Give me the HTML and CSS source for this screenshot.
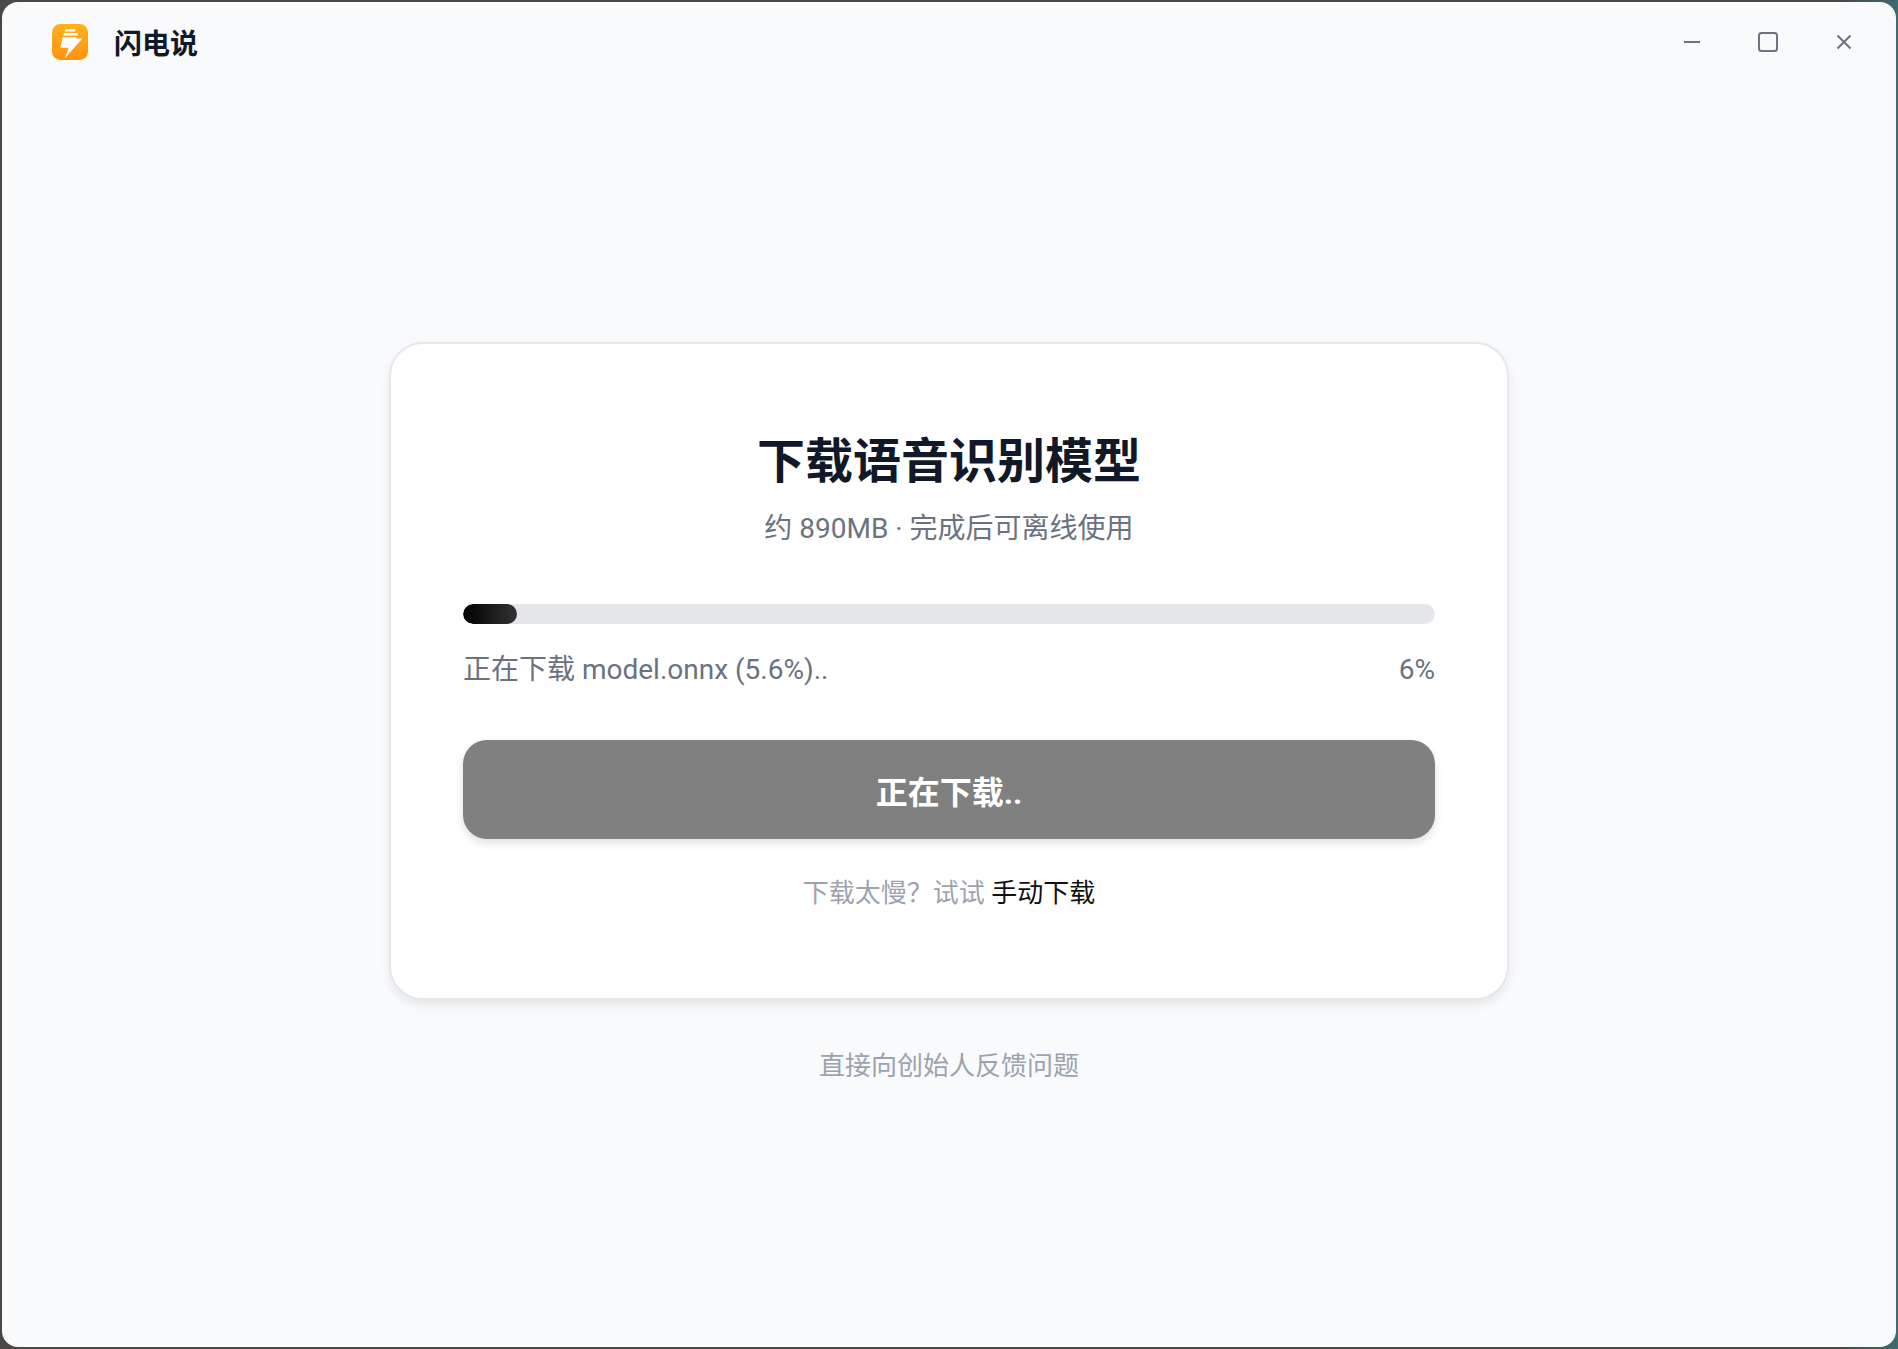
FILE: index.html
```html
<!DOCTYPE html>
<html lang="zh-CN">
<head>
    <meta charset="UTF-8">
    <meta name="viewport" content="width=device-width, initial-scale=1.0">
    <title>闪电说</title>
    <link rel="stylesheet" href="styles.css">
</head>
<body>
    <div class="window">
        <header class="titlebar">
            <div class="brand">
                <svg class="logo" viewBox="0 0 35 35">
                    <defs>
                        <linearGradient id="logoFill" x1="0" y1="0" x2="0" y2="1">
                            <stop offset="0" stop-color="#ffb21c"/>
                            <stop offset="1" stop-color="#ff9212"/>
                        </linearGradient>
                    </defs>
                    <rect width="35" height="35" rx="8" fill="url(#logoFill)"/>
                    <path d="M13 5h10l-.6 2.200H12.400zM11.800 8.800h13.600l-.8 2.400H11zM10.400 13h13.200l-.8 1H29.500L12.300 33.500 16.300 23H8z" fill="#fff"/>
                </svg>
                <span class="app-name">闪电说</span>
            </div>
            <div class="window-controls">
                <button class="control-button">
                    <svg viewBox="0 0 20 20"><path d="M2 10h16"/></svg>
                </button>
                <button class="control-button">
                    <svg viewBox="0 0 20 20"><rect x="1" y="1" width="18" height="18" rx="2.5"/></svg>
                </button>
                <button class="control-button">
                    <svg viewBox="0 0 20 20"><path d="M3.500 3.500l13 13M16.500 3.500l-13 13"/></svg>
                </button>
            </div>
        </header>
        <main class="content">
            <section class="card">
                <h1 class="card-title">下载语音识别模型</h1>
                <p class="card-subtitle">约 890MB · 完成后可离线使用</p>
                <div class="progress-track">
                    <div class="progress-fill" style="width: 5.6%"></div>
                </div>
                <div class="progress-info">
                    <span>正在下载 model.onnx (5.6%)..</span>
                    <span>6%</span>
                </div>
                <button class="download-button">正在下载..</button>
                <p class="manual-hint">下载太慢？试试 <a class="manual-link">手动下载</a></p>
            </section>
            <a class="feedback-link">直接向创始人反馈问题</a>
        </main>
    </div>
</body>
</html>
```

FILE: styles.css
```css
* {
    box-sizing: border-box;
}
html, body {
    height: 100%;
}
body {
    margin: 0;
    background: linear-gradient(90deg, #4a4846 0%, #4a4846 97%, #3d6a72 100%);
    font-family: Roboto, "Noto Sans CJK SC", sans-serif;
    overflow: hidden;
}
.window {
    display: flex;
    flex-direction: column;
    margin: 2px;
    height: calc(100% - 4px);
    background-color: #f9fafb;
    border-radius: 16px;
}
.titlebar {
    display: flex;
    justify-content: space-between;
    align-items: center;
    height: 80px;
    padding: 0 42px 0 50px;
    flex-shrink: 0;
}
.brand {
    display: flex;
    align-items: center;
    gap: 26px;
}
.logo {
    width: 36px;
    height: 36px;
}
.app-name {
    font-size: 28px;
    font-weight: 700;
    color: #111827;
}
.window-controls {
    display: flex;
    gap: 56px;
}
.control-button {
    width: 20px;
    height: 20px;
    padding: 0;
    border: none;
    background: none;
}
.control-button svg {
    display: block;
    width: 20px;
    height: 20px;
    fill: none;
    stroke: #6b7280;
    stroke-width: 2;
}
.content {
    flex: 1;
    display: flex;
    flex-direction: column;
    align-items: center;
    padding-top: 260px;
}
.card {
    width: 1120px;
    height: 658px;
    padding: 85px 72px 0;
    background-color: #fff;
    border: 2px solid #e5e7eb;
    border-radius: 34px;
    box-shadow: 0 5px 10px rgba(0, 0, 0, 0.08);
    text-align: center;
}
.card-title {
    margin: 0;
    font-size: 48px;
    line-height: 66px;
    font-weight: 700;
    color: #111827;
}
.card-subtitle {
    margin: 13px 0 0;
    font-size: 28px;
    line-height: 42px;
    color: #6b7280;
}
.progress-track {
    height: 20px;
    margin-top: 54px;
    background-color: #e5e7eb;
    border-radius: 10px;
    overflow: hidden;
}
.progress-fill {
    height: 100%;
    background: linear-gradient(90deg, #000, #333);
    border-radius: 10px;
}
.progress-info {
    display: flex;
    justify-content: space-between;
    margin-top: 25px;
    font-size: 28px;
    line-height: 42px;
    color: #6b7280;
}
.download-button {
    display: block;
    width: 100%;
    height: 99px;
    margin-top: 49px;
    border: none;
    border-radius: 24px;
    background-color: #808080;
    box-shadow: 0 4px 8px rgba(0, 0, 0, 0.12);
    color: #fff;
    font-family: inherit;
    font-size: 32px;
    font-weight: 700;
}
.manual-hint {
    margin: 34px 0 0;
    font-size: 26px;
    line-height: 40px;
    color: #9ca3af;
}
.manual-link {
    color: #111;
}
.feedback-link {
    margin-top: 46px;
    font-size: 26px;
    line-height: 40px;
    color: #9ca3af;
}
```
